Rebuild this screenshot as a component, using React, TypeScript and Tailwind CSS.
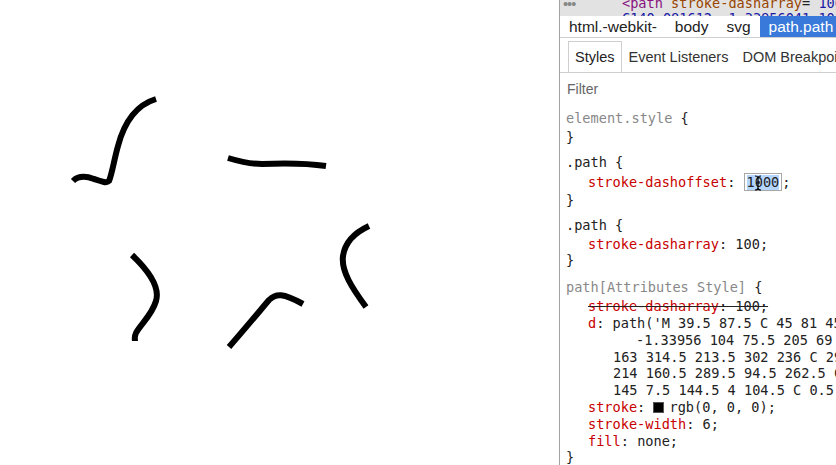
import React from 'react';

const mono = "font-['DejaVu_Sans_Mono','Liberation_Mono',monospace] text-[13.6px]";
const sans = "font-['Liberation_Sans',Arial,sans-serif] text-[14.5px]";

const Prop = ({ name, children, className = '' }: { name: string; children: React.ReactNode; className?: string }) => (
  <div className={`h-[16.8px] leading-[16.8px] pl-[22px] whitespace-nowrap ${className}`}>
    <span className="text-[#c80000]">{name}</span>
    <span className="text-[#222]">: {children}</span>
  </div>
);

const Selector = ({ children }: { children: React.ReactNode }) => (
  <div className="h-[21px] leading-[21px] whitespace-nowrap">{children}</div>
);

const Close = () => <div className="h-[16.8px] leading-[16.8px] text-[#222]">{'}'}</div>;

export default function App() {
  return (
    <div className="w-[836px] h-[465px] flex overflow-hidden bg-white">
      {/* drawing area */}
      <svg width="559" height="465" className="shrink-0 bg-white" fill="none" stroke="#000" strokeWidth="6">
        <path d="M73 181 C79 175, 86 176, 94 179 C101 181, 106 184, 109 181 C112 174, 114 160, 118 146 C123 127, 133 106, 156 99" />
        <path d="M228 158 C238 161, 248 164, 262 164 C285 163, 305 163, 326 166" />
        <path d="M132 255 C150 272, 160 288, 156 301 C152 315, 140 325, 136 333 C134 337, 135 340, 135 341" />
        <path d="M229 347 C243 331, 258 313, 269 300 C276 293, 283 293, 303 304" />
        <path d="M369 226 C356 232, 345 242, 343 256 C341 271, 352 288, 366 307" />
      </svg>

      {/* devtools panel */}
      <div className="flex-1 min-w-0 border-l border-[#a3a3a3] flex flex-col overflow-hidden">
        {/* elements strip */}
        <div className="h-[16px] shrink-0 bg-[#e2e2e2] overflow-hidden flex">
          <div className={`${sans} text-[12px] text-[#888] pl-[3px] w-[62px] shrink-0 leading-[8px] tracking-[-1px]`}>•••</div>
          <div className={`${mono} leading-[15px] mt-[-4px] whitespace-nowrap`}>
            <div>
              <span className="text-[#881280]">&lt;path </span>
              <span className="text-[#994500]">stroke-dasharray</span>
              <span className="text-[#222]">=</span>
              <span className="text-[#1a1aa6]"> 100</span>
            </div>
            <div className="text-[#1a1aa6]">C140.081612 -1.33956041 104</div>
          </div>
        </div>

        {/* breadcrumbs */}
        <div className={`${sans} text-[15.5px] h-[22px] shrink-0 flex border-b border-[#cfcfcf] text-[#222] whitespace-nowrap`}>
          <div className="px-[9px] flex items-center">html.-webkit-</div>
          <div className="px-[9px] flex items-center">body</div>
          <div className="px-[9px] flex items-center">svg</div>
          <div className="px-[9px] flex items-center bg-[#3879d9] text-white flex-1">path.path</div>
        </div>

        {/* tabs */}
        <div className={`${sans} h-[35px] shrink-0 flex items-end pl-[8px] border-b border-[#cfcfcf] text-[#333] whitespace-nowrap`}>
          <div className="h-[31px] pt-[2px] px-[6px] flex items-center border border-b-0 border-[#cfcfcf] bg-white text-[#222]">Styles</div>
          <div className="h-[31px] pt-[2px] px-[7px] flex items-center">Event Listeners</div>
          <div className="h-[31px] pt-[2px] px-[7px] flex items-center">DOM Breakpoints</div>
        </div>

        {/* filter */}
        <div className={`${sans} text-[14px] h-[32px] shrink-0 flex items-center pl-[7px] text-[#666]`}>Filter</div>

        {/* rules */}
        <div className={`${mono} pl-[6px] pt-[3px] flex flex-col gap-[6px] text-[#222]`}>
          <div>
            <Selector>
              <span className="text-[#888]">element.style</span> {'{'}
            </Selector>
            <Close />
          </div>

          <div>
            <Selector>.path {'{'}</Selector>
            <div className="h-[19px] leading-[19px] pl-[22px] whitespace-nowrap flex items-center">
              <span className="text-[#c80000]">stroke-dashoffset</span>
              <span>:&nbsp;</span>
              <span className="relative inline-flex items-center h-[18px] border border-[#a8a8a8] px-[2px] bg-white">
                <span className="bg-[#b4d5fe] leading-[15px]">1000</span>
                <svg className="absolute left-[9px] top-[1px]" width="8" height="16" viewBox="0 0 8 16" fill="none" stroke="#000" strokeWidth="1.2">
                  <path d="M1 1 C3 1, 4 2, 4 3 L4 13 C4 14, 3 15, 1 15 M7 1 C5 1, 4 2, 4 3 M4 13 C4 14, 5 15, 7 15 M2 8 L6 8" />
                </svg>
              </span>
              <span>;</span>
            </div>
            <Close />
          </div>

          <div>
            <Selector>.path {'{'}</Selector>
            <Prop name="stroke-dasharray">100;</Prop>
            <Close />
          </div>

          <div className="mt-[2px]">
            <Selector>
              <span className="text-[#888]">path[Attributes Style]</span> {'{'}
            </Selector>
            <div className="h-[16.8px] leading-[16.8px] pl-[22px] whitespace-nowrap">
              <span className="line-through decoration-[#222]">
                <span className="text-[#c80000]">stroke-dasharray</span>: 100;
              </span>
            </div>
            <Prop name="d">path('M 39.5 87.5 C 45 81 45.5 89.5 60 91</Prop>
            <div className="h-[16.8px] leading-[16.8px] pl-[70px] whitespace-nowrap">-1.33956 104 75.5 205 69 C 213</div>
            <div className="h-[16.8px] leading-[16.8px] pl-[47px] whitespace-nowrap">163 314.5 213.5 302 236 C 298.5</div>
            <div className="h-[16.8px] leading-[16.8px] pl-[47px] whitespace-nowrap">214 160.5 289.5 94.5 262.5 C 51</div>
            <div className="h-[16.8px] leading-[16.8px] pl-[47px] whitespace-nowrap">145 7.5 144.5 4 104.5 C 0.5 65</div>
            <div className="h-[16.8px] leading-[16.8px] pl-[22px] whitespace-nowrap flex items-center">
              <span className="text-[#c80000]">stroke</span>
              <span>:&nbsp;</span>
              <span className="inline-block w-[11px] h-[11px] bg-black border border-[#555] mr-[5px]" />
              <span>rgb(0, 0, 0);</span>
            </div>
            <Prop name="stroke-width">6;</Prop>
            <Prop name="fill">none;</Prop>
            <Close />
          </div>
        </div>
      </div>
    </div>
  );
}
